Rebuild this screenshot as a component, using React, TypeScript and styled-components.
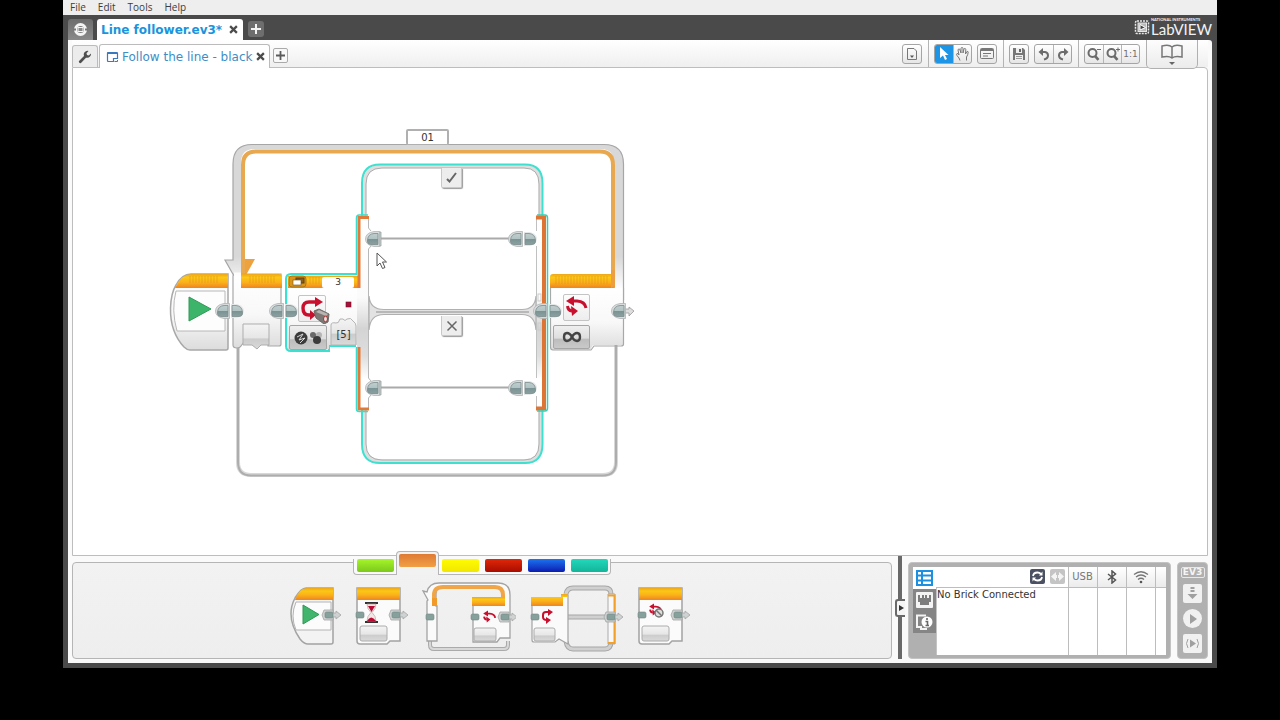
import React from "react";
import styled, { createGlobalStyle, css } from "styled-components";

const Global = createGlobalStyle`
  * { box-sizing: border-box; }
  html, body { margin: 0; background: #000; }
  body { font-family: "DejaVu Sans", sans-serif; font-size: 12px; color: #333; }
  button, input { font: inherit; color: inherit; margin: 0; padding: 0; }
  button { cursor: pointer; }
  svg { display: block; }
`;

/* ---------- window shell ---------- */
const Screen = styled.div`
  min-height: 100vh;
  padding: 0 63px 53px;
  display: flex;
  background: #000;
`;
const Shell = styled.div`
  flex: 1;
  min-width: 0;
  display: flex;
  flex-direction: column;
  background: #4a4a4a;
`;
const MenuBar = styled.nav`
  display: flex;
  gap: 12px;
  height: 15px;
  padding: 0 7px;
  background: #eeeeee;
  font-family: "Open Sans", sans-serif;
  font-size: 10px;
  line-height: 15px;
`;
const MenuItem = styled.button`
  border: 0;
  background: none;
  color: #3c3c3c;
`;
const TitleRow = styled.header`
  display: flex;
  align-items: flex-end;
  height: 25px;
  padding: 0 5px;
`;
const LobbyTab = styled.button`
  display: grid;
  place-items: center;
  width: 25px;
  height: 21px;
  margin-right: 4px;
  border: 0;
  border-radius: 3px 3px 0 0;
  background: linear-gradient(#6c6c6c, #8a8a8a);
`;
const ProjectTab = styled.div`
  display: flex;
  align-items: center;
  gap: 6px;
  height: 21px;
  padding: 0 5px 0 4px;
  border-radius: 3px 3px 0 0;
  background: #fff;
  color: #1a94dc;
  font-weight: bold;
`;
const CloseButton = styled.button`
  display: grid;
  place-items: center;
  width: 10px;
  height: 12px;
  border: 0;
  background: none;
`;
const AddProject = styled.button`
  display: grid;
  place-items: center;
  width: 16px;
  height: 16px;
  margin: 0 0 3px 5px;
  border: 0;
  border-radius: 3px;
  background: #6e6e6e;
`;
const Logo = styled.div`
  display: flex;
  align-items: center;
  gap: 1px;
  margin-left: auto;
  height: 25px;
`;
const LogoText = styled.div`
  display: flex;
  flex-direction: column;
  padding-bottom: 2px;
  color: #f2f2f2;
  font-family: Lato, sans-serif;
  font-size: 15px;
  line-height: 14px;
`;
const LogoSmall = styled.span`
  font-size: 4px;
  line-height: 4px;
  font-weight: bold;
`;
const Body = styled.main`
  flex: 1;
  display: flex;
  flex-direction: column;
  margin: 0 5px 5px;
  padding: 0 4px 4px;
  background: #fafafa;
  border-radius: 0 3px 0 0;
`;

/* ---------- program tabs and toolbar ---------- */
const ToolRow = styled.div`
  display: flex;
  align-items: flex-end;
  height: 27px;
  position: relative;
  background: linear-gradient(#fff, #efefef);
`;
const WrenchTab = styled.button`
  display: grid;
  place-items: center;
  width: 26px;
  height: 22px;
  margin-right: 1px;
  border: 1px solid #bbb;
  border-bottom: 0;
  border-radius: 3px 3px 0 0;
  background: #ececec;
`;
const ProgramTab = styled.div`
  display: flex;
  align-items: center;
  gap: 3px;
  height: 24px;
  margin-bottom: -1px;
  padding: 0 4px 0 6px;
  border: 1px solid #bbb;
  border-bottom: 0;
  border-radius: 3px 3px 0 0;
  background: #fff;
  color: #3d8ec6;
  position: relative;
  z-index: 1;
`;
const AddProgram = styled.button`
  display: grid;
  place-items: center;
  width: 15px;
  height: 15px;
  margin: 0 auto 4px 3px;
  border: 1px solid #aaa;
  border-radius: 2px;
  background: #f8f8f8;
`;
const Section = styled.div<{ $first?: boolean }>`
  display: flex;
  align-items: center;
  gap: 5px;
  height: 27px;
  padding: 0 6px 0 5px;
  border-left: ${(p) => (p.$first ? "0" : "1px solid #b4b4b4")};
`;
const Group = styled.div`
  display: flex;
  border: 1px solid #a5a5a5;
  border-radius: 3px;
  background: linear-gradient(#fff, #e6e6e6);
  overflow: hidden;
`;
const ToolButton = styled.button<{ $active?: boolean }>`
  display: grid;
  place-items: center;
  width: 18px;
  height: 18px;
  border: 0;
  background: ${(p) => (p.$active ? "#1c95e6" : "none")};
  color: #707070;
  font-size: 9px;
  & + & { border-left: 1px solid #b5b5b5; }
`;
const BookTab = styled.button`
  display: grid;
  place-items: center;
  width: 52px;
  height: 29px;
  margin: 0 10px -2px 0;
  border: 1px solid #b0b0b0;
  border-top: 0;
  border-radius: 0 0 5px 5px;
  background: linear-gradient(#fdfdfd, #ebebeb);
  position: relative;
  z-index: 1;
`;

/* ---------- program canvas ---------- */
const Canvas = styled.section`
  flex: 1;
  min-height: 489px;
  border: 1px solid #bdbdbd;
  border-radius: 0 4px 0 0;
  background: #fff;
  padding: 56px 0 0 93px;
`;
const Diagram = styled.div`
  position: relative;
  width: 474px;
  height: 360px;
`;
type Spot = { $x: number; $y: number; $w: number; $h: number };
const spot = css<Spot>`
  position: absolute;
  left: ${(p) => p.$x - 166}px;
  top: ${(p) => p.$y - 124}px;
  width: ${(p) => p.$w}px;
  height: ${(p) => p.$h}px;
`;
const BlockInput = styled.input<Spot & { $framed?: boolean }>`
  ${spot}
  border: ${(p) => (p.$framed ? "2px solid #b0b0b0" : "0")};
  border-bottom-width: ${(p) => (p.$framed ? "1px" : "0")};
  border-radius: 2px;
  background: #fff;
  text-align: center;
  font-size: ${(p) => (p.$framed ? "10px" : "9px")};
  line-height: 11px;
`;
const BlockButton = styled.button<Spot & { $tone?: "light" | "mid" | "clear" }>`
  ${spot}
  display: grid;
  place-items: center;
  border: ${(p) => (p.$tone === "clear" ? "0" : p.$tone === "mid" ? "1px solid #a6a6a6" : "1px solid #c4c4c4")};
  border-radius: 2px;
  font-size: 10px;
  background: ${(p) =>
    p.$tone === "clear"
      ? "none"
      : p.$tone === "mid"
      ? "linear-gradient(#efefef 0%, #dedede 55%, #bdbdbd 60%, #c9c9c9 100%)"
      : "linear-gradient(#fdfdfd, #ededed)"};
`;
const CaseTab = styled.button<Spot>`
  ${spot}
  display: grid;
  place-items: center;
  border: 1px solid #c8c8c8;
  border-top: 0;
  border-radius: 0 0 2px 2px;
  background: #ededed;
  box-shadow: 1px 1px 1px #999;
`;
const Cursor = styled.svg<Spot>`
  ${spot}
  pointer-events: none;
`;

/* ---------- lower area ---------- */
const Lower = styled.div`
  display: flex;
  padding-top: 6px;
`;
const Palette = styled.section`
  flex: 1;
  min-width: 0;
  height: 97px;
  border: 1px solid #b5b5b5;
  border-radius: 4px;
  background: linear-gradient(#f2f2f2, #eeeeee);
`;
const CategoryTabs = styled.div`
  display: flex;
  justify-content: center;
  align-items: flex-end;
  height: 13px;
  margin-top: -1px;
`;
const CategoryTab = styled.button<{ $from: string; $to: string; $on?: boolean; $edge?: "first" | "last" }>`
  display: flex;
  justify-content: center;
  align-items: flex-start;
  width: 43px;
  height: ${(p) => (p.$on ? "24px" : "16px")};
  padding-top: ${(p) => (p.$on ? "2px" : "0")};
  border: 1px solid #b5b5b5;
  border-width: ${(p) =>
    p.$on ? "1px 1px 0" : p.$edge === "first" ? "0 0 1px 1px" : p.$edge === "last" ? "0 1px 1px 0" : "0 0 1px"};
  border-radius: ${(p) => (p.$on ? "4px 4px 0 0" : p.$edge === "first" ? "0 0 0 4px" : p.$edge === "last" ? "0 0 4px 0" : "0")};
  background: ${(p) => (p.$on ? "#f2f2f2" : "#fafafa")};
  position: relative;
  &::before {
    content: "";
    width: 37px;
    height: 13px;
    border-radius: 2px;
    background: linear-gradient(${(p) => p.$from}, ${(p) => p.$to});
  }
`;
const BlockRow = styled.div`
  display: flex;
  justify-content: center;
  gap: 13px;
  padding: 6px 0 0 14px;
`;
const PaletteBlock = styled.button`
  height: 72px;
  border: 0;
  background: none;
`;
const Splitter = styled.div`
  display: flex;
  align-items: center;
  width: 4px;
  margin: -6px 6px 0;
  background: #696969;
`;
const SplitHandle = styled.button`
  flex: none;
  display: grid;
  place-items: center end;
  width: 10px;
  height: 18px;
  margin-left: -3px;
  border: 2px solid #696969;
  border-right: 0;
  border-radius: 3px 0 0 3px;
  background: #f5f5f5;
`;
const BrickPanel = styled.section`
  display: flex;
  width: 263px;
  height: 97px;
  padding: 4px;
  border: 1px solid #c3c3c3;
  border-radius: 4px;
  background: #b0b0b0;
`;
const BrickTabs = styled.div`
  display: flex;
  flex-direction: column;
  width: 23px;
`;
const BrickTab = styled.button<{ $on?: boolean }>`
  display: grid;
  place-items: center;
  width: 23px;
  height: 22px;
  border: 0;
  background: ${(p) => (p.$on ? "#fff" : "#858585")};
`;
const BrickTable = styled.table`
  flex: 1;
  table-layout: fixed;
  border-collapse: collapse;
  background: #fff;
  height: 88px;
  th, td { border-left: 1px solid #bdbdbd; padding: 0; }
  th:first-child { border-left: 0; background: #fff; }
  td:first-child { border-left: 1px solid #c4c4c4; }
  th {
    height: 20px;
    border-bottom: 1px solid #bdbdbd;
    background: linear-gradient(#fff, #ebebeb);
    font-weight: normal;
    font-size: 10px;
    color: #777;
  }
  td { vertical-align: top; font-size: 10px; line-height: 14px; color: #333; white-space: nowrap; }
  th svg { margin: 0 auto; }
`;
const Col = styled.col<{ $w?: number }>`
  width: ${(p) => (p.$w ? p.$w + "px" : "auto")};
`;
const HeadTools = styled.div`
  display: flex;
  justify-content: flex-end;
  gap: 5px;
  padding-right: 3px;
`;
const SmallButton = styled.button<{ $dark?: boolean }>`
  display: grid;
  place-items: center;
  width: 15px;
  height: 15px;
  border: 0;
  border-radius: 2px;
  background: ${(p) => (p.$dark ? "#4b5162" : "#c4c4c4")};
`;
const RunPanel = styled.section`
  display: flex;
  flex-direction: column;
  align-items: center;
  gap: 6px;
  width: 31px;
  height: 97px;
  margin-left: 6px;
  padding-top: 4px;
  border: 1px solid #c3c3c3;
  border-radius: 4px;
  background: #b0b0b0;
`;
const Ev3Label = styled.div`
  width: 24px;
  height: 11px;
  border: 1px solid #e8e8e8;
  border-radius: 2px;
  color: #f5f5f5;
  font-size: 9px;
  font-weight: bold;
  line-height: 9px;
  text-align: center;
`;
const RunButton = styled.button<{ $round?: boolean }>`
  display: grid;
  place-items: center;
  width: 19px;
  height: 19px;
  border: 0;
  border-radius: ${(p) => (p.$round ? "50%" : "2px")};
  background: #f1f1f1;
`;

/* ---------- small drawings ---------- */
const Cross = ({ s = 9, w = 2, c = "#4c4c4c" }: { s?: number; w?: number; c?: string }) => (
  <svg width={s} height={s} viewBox="0 0 8 8"><path d="M1 1L7 7M7 1L1 7" stroke={c} strokeWidth={w} /></svg>
);
const Plus = ({ c, s = 10 }: { c: string; s?: number }) => (
  <svg width={s} height={s} viewBox="0 0 10 10"><path d="M5 0V10M0 5H10" stroke={c} strokeWidth="2" /></svg>
);
const Magnifier = ({ sign }: { sign: string }) => (
  <svg width="16" height="16" viewBox="0 0 16 16" fill="none" stroke="#6b6b6b">
    <circle cx="6.500" cy="7" r="4" strokeWidth="2" />
    <path d="M9 10L12.500 13.800" strokeWidth="2.600" />
    <path d={sign} strokeWidth="1" />
  </svg>
);

const Gradients = () => (
  <defs>
    <linearGradient id="gold" x1="0" y1="0" x2="0" y2="1">
      <stop offset="0" stopColor="#eda61c" /><stop offset=".25" stopColor="#fbc814" />
      <stop offset=".6" stopColor="#fbb01c" /><stop offset="1" stopColor="#ef8420" />
    </linearGradient>
    <linearGradient id="shell" x1="0" y1="0" x2="0" y2="1">
      <stop offset="0" stopColor="#fff" /><stop offset=".55" stopColor="#f8f8f8" /><stop offset="1" stopColor="#dcdcdc" />
    </linearGradient>
    <linearGradient id="slot" x1="0" y1="0" x2="0" y2="1">
      <stop offset="0" stopColor="#f4f4f4" /><stop offset=".55" stopColor="#e6e6e6" /><stop offset=".6" stopColor="#cccccc" /><stop offset="1" stopColor="#dadada" />
    </linearGradient>
    <linearGradient id="column" x1="0" y1="0" x2="0" y2="1">
      <stop offset="0" stopColor="#fff" /><stop offset=".42" stopColor="#fbfbfb" /><stop offset=".58" stopColor="#d4d4d4" />
      <stop offset=".72" stopColor="#dedede" /><stop offset=".84" stopColor="#fff" /><stop offset="1" stopColor="#fff" />
    </linearGradient>
    <linearGradient id="band" x1="0" y1="144" x2="0" y2="288" gradientUnits="userSpaceOnUse">
      <stop offset="0" stopColor="#d8d8d8" /><stop offset=".78" stopColor="#d8d8d8" /><stop offset="1" stopColor="#fdfdfd" />
    </linearGradient>
    <linearGradient id="plug" x1="0" y1="0" x2="0" y2="1">
      <stop offset="0" stopColor="#c0cdcd" /><stop offset=".5" stopColor="#b0c2c2" /><stop offset=".54" stopColor="#7b9394" /><stop offset="1" stopColor="#8ba0a0" />
    </linearGradient>
    <pattern id="ribs" width="3" height="8" patternUnits="userSpaceOnUse"><path d="M1 0V8" stroke="#d98a10" strokeWidth="1" opacity=".45" /></pattern>
  </defs>
);

/* Connector halves: "out" is round on the left, "in" is round on the right. */
const Plug = ({ x, y, dir }: { x: number; y: number; dir: "in" | "out" }) => (
  <g transform={`translate(${x} ${y})`}>
    {dir === "out" ? (
      <>
        <path d="M11.500 -7.500H6Q-2.500 -6 -2.500 0Q-2.500 6 6 7.500H11.500Z" fill="#d9dcdc" stroke="#b0b4b4" strokeWidth=".8" />
        <path d="M10 -5.500H6Q0 -5 -.5 1V3Q0 5.500 3 5.500H10Z" fill="url(#plug)" stroke="#7c8d8e" strokeWidth=".8" />
      </>
    ) : (
      <>
        <path d="M0 -7H6Q13 -5 13 0Q13 5 6 7H0Z" fill="#e6e8e8" />
        <path d="M1 -5.500H5Q11 -5 11.500 1V3Q11 5.500 8 5.500H1Z" fill="url(#plug)" stroke="#7c8d8e" strokeWidth=".8" />
      </>
    )}
  </g>
);

const ProgramDrawing = () => (
  <svg width="474" height="360" viewBox="166 124 474 360" fill="none" aria-hidden="true">
    <Gradients />
    {/* loop frame */}
    <path d="M238 347V462Q238 475 251 475H603Q616 475 616 462V345" stroke="#d8d8d8" strokeWidth="4" />
    <path d="M238 347V462Q238 475.500 251 475.500H603Q616 475.500 616 462V345" stroke="#adadad" strokeWidth="2" />
    <path d="M233 260V164Q233 144.500 252 144.500H604Q623.500 144.500 623.500 164V288H614V163Q614 149 601 149H254Q241 149 241 163V276H234L225 260Z" fill="url(#band)" />
    <path d="M234 276L225 260H233V164Q233 144.500 252 144.500H604Q623.500 144.500 623.500 164V300" stroke="#a6a6a6" strokeWidth="1.200" />
    <path d="M242 259H255L245 277H242Z" fill="#eda23e" />
    <path d="M243 276V165Q243 151.500 256 151.500H600Q613 151.500 613 165V288" stroke="#e8a850" strokeWidth="4" />
    {/* start block */}
    <path d="M228 274V348Q228 350 226 350H190Q187 350 184 347Q170 332 170.500 308Q171 293 176 285Q182 274 191 274Z" fill="url(#shell)" stroke="#a8a8a8" strokeWidth="1.500" />
    <path d="M228 274H191Q182 274 175 288H228Z" fill="url(#gold)" />
    <rect x="188" y="276" width="31" height="7" fill="url(#ribs)" />
    <path d="M225 291H176Q171 310 177 331H225Z" fill="#fdfdfd" stroke="#b8b8b8" />
    <path d="M189 297V321L211 309Z" fill="#3cb56b" stroke="#2f9a56" />
    <Plug x={218} y={311} dir="out" />
    {/* loop entry */}
    <path d="M234 274H281V344Q281 346 279 346H268V342H244L241 346Q240 348 237 348Q233 348 233 345V276Z" fill="url(#shell)" stroke="#a8a8a8" strokeWidth="1.200" />
    <path d="M234 274H241" stroke="#fdfdfd" strokeWidth="3" />
    <path d="M241 274H279Q282 274 282 277V288H241Z" fill="url(#gold)" />
    <rect x="248" y="276" width="27" height="7" fill="url(#ribs)" />
    <path d="M243 324H269V345H261L257 349L252 345H243Z" fill="url(#slot)" stroke="#adadad" />
    <Plug x={231} y={311} dir="in" />
    <Plug x={272} y={311} dir="out" />
    {/* switch cases */}
    <path d="M364.500 218V184Q364.500 166.500 382 166.500H524Q540.500 166.500 540.500 184V218M364.500 408V444Q364.500 461 382 461H524Q540.500 461 540.500 444V408" stroke="#dedede" strokeWidth="3.500" />
    <path d="M366 218V184Q366 168 382 168H524Q539 168 539 184V218M366 408V444Q366 460 382 460H524Q539 460 539 444V408" stroke="#adadad" />
    <path d="M362 216V183Q362 164.500 380 164.500H525Q542.500 164.500 542.500 183V216M362 410V444Q362 463 380 463H525Q542.500 463 542.500 444V410" stroke="#3fe0cf" strokeWidth="2" />
    <path d="M369 296Q370 309.500 384 309.500H522Q535 309.500 536 296V330Q535 314.500 522 314.500H384Q370 314.500 369 330Z" fill="#e2e2e2" stroke="#b0b0b0" strokeWidth="1.200" />
    <path d="M376 312H529" stroke="#b8b8b8" strokeWidth="2" />
    <path d="M380 238.500H512M380 387.500H512" stroke="#aaa" strokeWidth="2" />
    {/* switch body */}
    <path d="M357 274H291Q286 274 286 279V346Q286 351 291 351H329V346H356" fill="#ececec" stroke="#38e1d0" strokeWidth="2" />
    <path d="M288 288H358V345H329V349H288Z" fill="url(#shell)" />
    <path d="M357 216H369V410H357Z" fill="url(#column)" />
    <path d="M368.500 218V228L371 231M371 246L368.500 249V378L371 381M371 395L368.500 398V409" stroke="#b8b8b8" />
    <path d="M288 276H358V288H288Z" fill="url(#gold)" />
    <path d="M369 217.500H359V288M359 347V409H369" stroke="#e17a38" strokeWidth="3" />
    <path d="M356.500 275V218Q356.500 215 359 215H368M356.500 347V409Q356.500 411.500 359 411.500H368" stroke="#3bdccb" strokeWidth="1.500" />
    <rect x="308" y="277" width="12" height="7" fill="url(#ribs)" />
    <rect x="289" y="276" width="17" height="11" rx="3" fill="#d9951a" stroke="#a36d12" strokeWidth=".8" />
    <rect x="296" y="278" width="8" height="5" fill="#8b5d17" stroke="#5d430f" />
    <rect x="293" y="280" width="8" height="5" fill="#fff" stroke="#775010" strokeWidth=".6" />
    <rect x="346" y="302" width="5" height="5" fill="#a51237" stroke="#7a0d29" strokeWidth=".6" />
    <path d="M331 345V325Q331 322 336 323Q339 323 339 321Q339 318 343 319Q345 322 347 319Q351 317 353 321Q356 323 356 326V345Z" fill="url(#slot)" stroke="#b4b4b4" />
    <path d="M536 216H546V410H536Z" fill="url(#column)" />
    <path d="M536.500 218V231M536.500 246V378M536.500 396V409" stroke="#c0c0c0" />
    <path d="M536 217.500H544V408.500H536" stroke="#dc7536" strokeWidth="4" />
    <path d="M537 215H545Q547.500 215 547.500 218V408Q547.500 411 545 411H537" stroke="#3bcdb4" strokeWidth="1.500" />
    <rect x="538" y="294" width="3" height="7" stroke="#ccc" /><rect x="538" y="323" width="3" height="7" stroke="#ccc" />
    <path d="M378 232H381V246H378Z" fill="#c4c8c8" stroke="#9aa3a3" strokeWidth=".8" /><path d="M378 381H381V395H378Z" fill="#c4c8c8" stroke="#9aa3a3" strokeWidth=".8" />
    <Plug x={368} y={239} dir="out" /><Plug x={511} y={239} dir="out" /><Plug x={524} y={239} dir="in" />
    <Plug x={368} y={388} dir="out" /><Plug x={511} y={388} dir="out" /><Plug x={524} y={388} dir="in" />
    <Plug x={285} y={311} dir="in" />
    {/* loop end */}
    <path d="M551 288H623V344Q623 345 622 345H593L590 350H553Q551 350 551 347Z" fill="url(#shell)" />
    <path d="M623.500 288V344Q623.500 346 621 346H594L591 350H553Q550.500 350 550.500 347V288" stroke="#a8a8a8" strokeWidth="1.200" />
    <path d="M553 274H615V285Q615 288 612 288H550V277Q550 274 553 274Z" fill="url(#gold)" />
    <path d="M611 270H615V286L611 288Z" fill="#eb9f42" />
    <rect x="555" y="276" width="54" height="8" fill="url(#ribs)" />
    <Plug x={536} y={311} dir="out" /><Plug x={549} y={311} dir="in" />
    <path d="M624 309H629V307L634 311L629 316V313H624Z" fill="#ddd" stroke="#999" strokeWidth=".8" />
    <Plug x={614} y={311} dir="out" />
  </svg>
);

const LoopArrows = () => (
  <svg width="26" height="26" viewBox="0 0 26 26" fill="none" stroke="#c8102e" strokeWidth="3">
    <path d="M8 6H13Q21 6.500 22 13" /><path d="M10 1L2 6L10 11Z" fill="#c8102e" stroke="none" />
    <path d="M3.500 11Q4 15.500 8 16" /><path d="M7 11L14 16L8 21Z" fill="#c8102e" stroke="none" />
  </svg>
);
const SwitchArrows = () => (
  <svg width="32" height="28" viewBox="0 0 32 28" fill="none" stroke="#c8102e" strokeWidth="3.400">
    <path d="M17 6H10Q4 6 4 12Q4 19 10 19H13" />
    <path d="M16 1L24 6L16 11Z" fill="#c8102e" stroke="none" /><path d="M11 14L17 19L11 24Z" fill="#c8102e" stroke="none" />
    <path d="M15 15L20 13L30 18L29 26L25 28L17 22Z" fill="#7d7875" stroke="#6c6866" strokeWidth="1" />
    <path d="M20 14L29 18L27 20L17 16Z" fill="#b9b5b2" stroke="none" />
    <ellipse cx="26.500" cy="23" rx="2" ry="2.800" fill="#e9e3e0" stroke="#a33" strokeWidth="1" />
  </svg>
);
const SensorMode = () => (
  <svg width="34" height="20" viewBox="0 0 34 20" fill="none">
    <circle cx="10" cy="10" r="6.500" fill="#3c3c3c" /><path d="M6 9L12 6L8 12L14 10L9 15" stroke="#d8d8d8" />
    <circle cx="22" cy="7" r="3" fill="#6a6a6a" /><circle cx="28" cy="7" r="3" fill="#b5b5b5" /><circle cx="26" cy="12" r="4" fill="#3c3c3c" />
  </svg>
);
const Infinity8 = () => (
  <svg width="22" height="14" viewBox="0 0 22 14" fill="none" stroke="#454545" strokeWidth="2.400">
    <path d="M11 7C8 1.500 3 2 3 7S8 12.500 11 7C14 1.500 19 2 19 7S14 12.500 11 7Z" />
  </svg>
);

/* ---------- palette drawings ---------- */
const MiniPlug = ({ x, y, tail }: { x: number; y: number; tail?: boolean }) => (
  <g>
    {tail && <path d={`M${x - 5} ${y - 5}H${x + 4}V${y - 2}H${x + 7}V${y - 4}L${x + 12} ${y}L${x + 7} ${y + 4}V${y + 2}H${x + 4}V${y + 5}H${x - 5}L${x - 7} ${y}Z`} fill="#cfd2d2" stroke="#a4a4a4" strokeWidth=".8" />}
    <rect x={x - 4} y={y - 3} width="8" height="6" rx="1.500" fill="#86a09c" stroke="#708683" strokeWidth=".6" />
  </g>
);
const MiniStart = () => (
  <svg width="53" height="72" viewBox="288 581 53 72" fill="none">
    <path d="M332 588V642Q332 644 330 644H307Q303 644 299 639Q284 617 294 598Q300 588 305 588Z" fill="#f3f3f3" stroke="#a3a3a3" strokeWidth="1.500" />
    <path d="M332 588H306Q298 588 294 600H332Z" fill="url(#gold)" />
    <path d="M330 602H295Q289 616 295 630H330Z" fill="#fcfcfc" stroke="#b4b4b4" />
    <path d="M302 605V624L318 614.500Z" fill="#41b56c" stroke="#2f9a56" />
    <MiniPlug x={328} y={615} tail />
  </svg>
);
const MiniBody = ({ x }: { x: number }) => (
  <g>
    <path d={`M${x} 588H${x + 43}V641H${x + 33}L${x + 30} 644H${x + 3}Q${x} 644 ${x} 641Z`} fill="#fbfbfb" stroke="#a3a3a3" strokeWidth="1.500" />
    <path d={`M${x} 588H${x + 43}V600H${x}Z`} fill="url(#gold)" />
    <rect x={x + 3} y="626" width="27" height="15" rx="2" fill="url(#slot)" stroke="#acacac" />
    <MiniPlug x={x + 3} y={615} />
    <MiniPlug x={x + 39} y={615} tail />
  </g>
);
const MiniWait = () => (
  <svg width="54" height="72" viewBox="354 581 54 72" fill="none">
    <MiniBody x={356} />
    <path d="M364 603H377M364 622H377" stroke="#333" strokeWidth="2" />
    <path d="M366 604H375Q375 609 371 612.500Q375 616 375 621H366Q366 616 370 612.500Q366 609 366 604Z" fill="#f4e6e6" stroke="#b98" strokeWidth=".6" />
    <path d="M367 606H374L370.500 612ZM366 621Q370 614 375 621Z" fill="#b80c35" />
  </svg>
);
const MiniLoop = () => (
  <svg width="94" height="72" viewBox="421 581 94 72" fill="none">
    <path d="M429 641V645Q429 649 433 649H503Q507 649 507 645V641" stroke="#aaa" strokeWidth="4" />
    <path d="M429 641V645Q429 649 433 649H503Q507 649 507 645V641" stroke="#d8d8d8" strokeWidth="2" />
    <path d="M427 600L422 591L426 592Q428 583 438 583H497Q509 583 509 595V638H499L496 642H472V600H502V596Q502 587 494 587H442Q435 587 435 594V606H436V641H426V601Z" fill="#fafafa" stroke="#a3a3a3" strokeWidth="1.300" />
    <path d="M433 605V595Q433 587 442 587H494Q502 587 502 595V600" stroke="#f0a648" strokeWidth="4" />
    <path d="M431 598H436V606H431Z" fill="#f29a28" />
    <path d="M471 597H504V606H471Z" fill="url(#gold)" />
    <rect x="473" y="628" width="22" height="13" rx="2" fill="url(#slot)" stroke="#acacac" />
    <g transform="translate(481 610) scale(.6)"><path d="M8 6H13Q21 6.500 22 13M3.500 11Q4 15.500 8 16" stroke="#c8102e" strokeWidth="3.200" /><path d="M10 1L2 6L10 11ZM7 11L14 16L8 21Z" fill="#c8102e" /></g>
    <MiniPlug x={429} y={617} /><MiniPlug x={474} y={617} /><MiniPlug x={504} y={617} tail />
  </svg>
);
const MiniSwitch = () => (
  <svg width="94" height="72" viewBox="528 581 94 72" fill="none">
    <path d="M565 594Q566 588 572 588H604Q610 588 610 594M565 617H610M565 641Q566 649 572 649H604Q610 649 610 641" stroke="#a6a6a6" strokeWidth="5" />
    <path d="M565 594Q566 588 572 588H604Q610 588 610 594M565 617H610M565 641Q566 649 572 649H604Q610 649 610 641" stroke="#d0d0d0" strokeWidth="3" />
    <path d="M531 598H561V595H567V644L558 639L554 642H533Q531 642 531 640Z" fill="#fafafa" stroke="#a3a3a3" strokeWidth="1.200" />
    <path d="M530 597H560V594H567V597H562V606H530Z" fill="url(#gold)" />
    <rect x="533" y="628" width="21" height="13" rx="2" fill="url(#slot)" stroke="#acacac" />
    <path d="M607 594H614V644H607Z" fill="#f8f8f8" stroke="#aaa" /><path d="M607 595.500H613.500V643H607" stroke="#f2a02a" strokeWidth="2" />
    <path d="M548 612H545Q542 612 542 615V617Q542 620 546 620" stroke="#c8102e" strokeWidth="2" /><path d="M547 609L552 612L547 616ZM545 617L550 620L545 624Z" fill="#c8102e" />
    <MiniPlug x={534} y={617} /><MiniPlug x={610} y={617} tail />
  </svg>
);
const MiniInterrupt = () => (
  <svg width="54" height="72" viewBox="635 581 54 72" fill="none">
    <MiniBody x={638} />
    <g transform="translate(647 603) scale(.6)"><path d="M8 6H13Q21 6.500 22 13M3.500 11Q4 15.500 8 16" stroke="#c8102e" strokeWidth="3.200" /><path d="M10 1L2 6L10 11ZM7 11L14 16L8 21Z" fill="#c8102e" /></g>
    <circle cx="658" cy="613" r="4" fill="#ddd" stroke="#777" strokeWidth="1.500" /><path d="M655 610L661 616" stroke="#777" strokeWidth="1.500" />
  </svg>
);

const menus = ["File", "Edit", "Tools", "Help"];
const categories = [
  { name: "Action", from: "#a6f52a", to: "#7cc81c", edge: "first" as const },
  { name: "Flow Control", from: "#e07a35", to: "#f0a044", on: true },
  { name: "Sensor", from: "#fffc00", to: "#f2e600" },
  { name: "Data Operations", from: "#e02808", to: "#a80c00" },
  { name: "Advanced", from: "#1c74f0", to: "#0c1cb0" },
  { name: "My Blocks", from: "#22d8bc", to: "#14b498", edge: "last" as const },
];
const paletteBlocks = [
  { name: "Start", art: <MiniStart /> },
  { name: "Wait", art: <MiniWait /> },
  { name: "Loop", art: <MiniLoop /> },
  { name: "Switch", art: <MiniSwitch /> },
  { name: "Loop Interrupt", art: <MiniInterrupt /> },
];

export default function App() {
  return (
    <Screen>
      <Global />
      <Shell>
        <MenuBar aria-label="Main menu">
          {menus.map((m) => <MenuItem key={m}>{m}</MenuItem>)}
        </MenuBar>
        <TitleRow>
          <LobbyTab aria-label="Lobby">
            <svg width="15" height="15" viewBox="0 0 15 15" fill="none">
              <circle cx="7.500" cy="7.500" r="5" stroke="#f4f4f4" strokeWidth="3" />
              <path d="M0 7.500H3M12 7.500H15" stroke="#777" strokeWidth="2" />
              <rect x="5" y="5.500" width="5" height="4" fill="#888" stroke="#f4f4f4" />
            </svg>
          </LobbyTab>
          <ProjectTab>
            <span>Line follower.ev3*</span>
            <CloseButton aria-label="Close project"><Cross /></CloseButton>
          </ProjectTab>
          <AddProject aria-label="New project"><Plus c="#f4f4f4" /></AddProject>
          <Logo>
            <svg width="16" height="15" viewBox="0 0 16 15" fill="none" stroke="#e8e8e8">
              <rect x="1.500" y="1" width="13" height="12.500" rx="1.500" strokeWidth="1.500" strokeDasharray="2 1" />
              <rect x="4" y="3" width="8.500" height="8.500" fill="#bbb" />
              <path d="M6 4.500L11.500 7.500L6 10Z" fill="#444" stroke="#fff" />
            </svg>
            <LogoText><LogoSmall>NATIONAL INSTRUMENTS</LogoSmall>LabVIEW</LogoText>
          </Logo>
        </TitleRow>
        <Body>
          <ToolRow>
            <WrenchTab aria-label="Project properties">
              <svg width="14" height="14" viewBox="0 0 14 14">
                <path d="M1 11L6 6Q5 3 7.500 1.500Q9 .5 10.500 1L8.500 3.200L9 5L10.800 5.500L13 3.500Q13.400 5 12 6.500Q10.500 8.300 8 7.700L3 13Q1.800 13.500 1.200 12.500Q.5 11.800 1 11Z" fill="#4f4f4f" />
              </svg>
            </WrenchTab>
            <ProgramTab>
              <svg width="13" height="12" viewBox="0 0 13 12" fill="none" stroke="#3a78c0">
                <path d="M2 1.500H10.500Q11.500 1.500 11.500 2.500V7.500H7.500V10.500H2.500Q1.500 10.500 1.500 9.500V2Z" strokeWidth="1.200" />
                <path d="M1.500 2H11.500" strokeWidth="2" /><path d="M8.500 10.500H11.500V9" />
              </svg>
              <span>Follow the line - black</span>
              <CloseButton aria-label="Close program"><Cross /></CloseButton>
            </ProgramTab>
            <AddProgram aria-label="New program"><Plus c="#5a5a5a" s={9} /></AddProgram>
            <Section $first>
              <Group><ToolButton aria-label="Program list">
                <svg width="12" height="14" viewBox="0 0 12 14" fill="none" stroke="#777"><path d="M1.500 1.500H8L10.500 4V12.500H1.500Z" /><path d="M4 8.500H8L6 11Z" fill="#555" stroke="none" /></svg>
              </ToolButton></Group>
            </Section>
            <Section>
              <Group>
                <ToolButton $active aria-label="Select">
                  <svg width="12" height="15" viewBox="0 0 12 15"><path d="M2 1V12L5 9.500L7 14L9 13L7 9H10.500Z" fill="#fff" /></svg>
                </ToolButton>
                <ToolButton aria-label="Pan">
                  <svg width="15" height="16" viewBox="0 0 15 16" fill="none" stroke="#777"><path d="M5 14.500Q4.500 12 2 9.500Q1 8 2 7.500Q3 7.200 4 9L3 4Q3 3 4 3T5 4L6 7V2.500Q6 1.500 7 1.500T8 2.500V7L9 3Q9.300 2.200 10 2.400T10.800 3.500L10.500 8L12 5.500Q13 5 13.200 6Q13 9 11.500 11V14.500" /></svg>
                </ToolButton>
              </Group>
              <Group><ToolButton aria-label="Comment">
                <svg width="16" height="14" viewBox="0 0 16 14" fill="none" stroke="#777"><rect x="1.500" y="1.500" width="13" height="10" rx="1" /><path d="M2 3H14" strokeWidth="2" /><path d="M4 6.500H12M4 9H9" /></svg>
              </ToolButton></Group>
            </Section>
            <Section>
              <Group><ToolButton aria-label="Save">
                <svg width="14" height="14" viewBox="0 0 14 14"><path d="M1 1H11L13 3V13H1Z" fill="#777" /><rect x="4" y="1" width="6" height="5" fill="#eee" /><rect x="7" y="2" width="2" height="3" fill="#666" /><rect x="3" y="8" width="8" height="5" fill="#eee" /><path d="M4 9.500H10M4 11.500H10" stroke="#999" /></svg>
              </ToolButton></Group>
              <Group>
                <ToolButton aria-label="Undo">
                  <svg width="14" height="14" viewBox="0 0 14 14" fill="none"><path d="M5 5H8Q11 5.500 11 8.500Q11 11.500 7 12.500" stroke="#6c6c6c" strokeWidth="2" /><path d="M6 1V9L1.500 5Z" fill="#6c6c6c" /></svg>
                </ToolButton>
                <ToolButton aria-label="Redo">
                  <svg width="14" height="14" viewBox="0 0 14 14" fill="none"><path d="M9 5H6Q3 5.500 3 8.500Q3 11.500 7 12.500" stroke="#6c6c6c" strokeWidth="2" /><path d="M8 1V9L12.500 5Z" fill="#6c6c6c" /></svg>
                </ToolButton>
              </Group>
            </Section>
            <Section>
              <Group>
                <ToolButton aria-label="Zoom out"><Magnifier sign="M11 3.500H15" /></ToolButton>
                <ToolButton aria-label="Zoom in"><Magnifier sign="M11 3.500H15M13 1.500V5.500" /></ToolButton>
                <ToolButton>1:1</ToolButton>
              </Group>
            </Section>
            <BookTab aria-label="Content editor">
              <svg width="24" height="24" viewBox="0 0 24 24" fill="none" stroke="#777" strokeWidth="1.500">
                <path d="M12 5Q9 2 2 4V15Q9 13.500 12 16Q15 13.500 22 15V4Q15 2 12 5ZM12 5V16" /><path d="M9 20H15L12 23Z" fill="#666" stroke="none" />
              </svg>
            </BookTab>
          </ToolRow>
          <Canvas aria-label="Program canvas">
            <Diagram>
              <ProgramDrawing />
              <BlockInput $x={406} $y={129} $w={43} $h={16} $framed aria-label="Loop name" defaultValue="01" />
              <BlockInput $x={322} $y={277} $w={32} $h={11} aria-label="Port" defaultValue="3" />
              <BlockButton $x={298} $y={295} $w={28} $h={27} aria-label="Switch"><SwitchArrows /></BlockButton>
              <BlockButton $x={289} $y={325} $w={38} $h={25} $tone="mid" aria-label="Sensor mode"><SensorMode /></BlockButton>
              <BlockButton $x={331} $y={324} $w={25} $h={20} $tone="clear">[5]</BlockButton>
              <CaseTab $x={441} $y={168} $w={21} $h={20} aria-label="True case">
                <svg width="13" height="13" viewBox="0 0 13 13" fill="none"><path d="M2 8L4.500 10.500L11 2" stroke="#666" strokeWidth="2" /></svg>
              </CaseTab>
              <CaseTab $x={441} $y={316} $w={21} $h={20} aria-label="False case"><Cross s={12} w={1} c="#666" /></CaseTab>
              <BlockButton $x={563} $y={294} $w={27} $h={27} aria-label="Loop"><LoopArrows /></BlockButton>
              <BlockButton $x={553} $y={325} $w={37} $h={24} $tone="mid" aria-label="Unlimited"><Infinity8 /></BlockButton>
              <Cursor $x={376} $y={252} $w={12} $h={18} viewBox="0 0 12 18">
                <path d="M1 1V14L4 11L6.500 16.500L9 15.500L6.500 10H10.500Z" fill="#fff" stroke="#555" />
              </Cursor>
            </Diagram>
          </Canvas>
          <Lower>
            <Palette aria-label="Programming palette">
              <CategoryTabs>
                {categories.map((c) => (
                  <CategoryTab key={c.name} $from={c.from} $to={c.to} $on={c.on} $edge={c.edge} aria-label={c.name} />
                ))}
              </CategoryTabs>
              <BlockRow>
                {paletteBlocks.map((b) => <PaletteBlock key={b.name} aria-label={b.name}>{b.art}</PaletteBlock>)}
              </BlockRow>
            </Palette>
            <Splitter>
              <SplitHandle aria-label="Collapse hardware page">
                <svg width="6" height="8" viewBox="0 0 6 8"><path d="M0 1V7L5 4Z" fill="#333" /></svg>
              </SplitHandle>
            </Splitter>
            <BrickPanel aria-label="Hardware">
              <BrickTabs>
                <BrickTab $on aria-label="Available bricks">
                  <svg width="17" height="16" viewBox="0 0 17 16" fill="none" stroke="#1c8fe0" strokeWidth="2"><rect x="1" y="1" width="15" height="14" /><path d="M1 5.500H16M1 10.500H16M6 1V15" /></svg>
                </BrickTab>
                <BrickTab aria-label="Port view">
                  <svg width="17" height="16" viewBox="0 0 17 16"><rect width="17" height="16" rx="1" fill="#f4f4f4" /><path d="M2 3H4V6H6V3H8V6H9V3H11V6H13V3H15V10H13V13H4V10H2Z" fill="#7d7d7d" /></svg>
                </BrickTab>
                <BrickTab aria-label="Brick information">
                  <svg width="17" height="16" viewBox="0 0 17 16" fill="none"><path d="M10 1.500H1V13H6M4 15H11" stroke="#f4f4f4" strokeWidth="2" /><circle cx="11" cy="8" r="5.500" fill="#fff" /><path d="M11 4V6M9.500 7.500H11.500V11M9.500 11.500H13" stroke="#666" strokeWidth="1.600" /></svg>
                </BrickTab>
              </BrickTabs>
              <BrickTable>
                <colgroup><Col /><Col $w={29} /><Col $w={29} /><Col $w={29} /><Col $w={11} /></colgroup>
                <thead>
                  <tr>
                    <th>
                      <HeadTools>
                        <SmallButton $dark aria-label="Refresh">
                          <svg width="13" height="13" viewBox="0 0 13 13" fill="none" stroke="#fff" strokeWidth="1.800"><path d="M2 6Q2.500 2.500 6.500 2.500Q8.500 2.500 10 4M11 7Q10.500 10.500 6.500 10.500Q4.500 10.500 3 9" /><path d="M11.500 1.500V5.500H8ZM1.500 11.500V7.500H5Z" fill="#fff" stroke="none" /></svg>
                        </SmallButton>
                        <SmallButton aria-label="Disconnect">
                          <svg width="13" height="11" viewBox="0 0 13 11" fill="#f4f4f4"><path d="M0 5.500L5 1V4H6V7H5V10ZM13 5.500L8 1V4H7V7H8V10Z" /></svg>
                        </SmallButton>
                      </HeadTools>
                    </th>
                    <th>USB</th>
                    <th aria-label="Bluetooth"><svg width="10" height="14" viewBox="0 0 10 14" fill="none" stroke="#555" strokeWidth="1.500"><path d="M1 4L8.500 10L5 13V1L8.500 4L1 10" /></svg></th>
                    <th aria-label="Wi-Fi"><svg width="16" height="14" viewBox="0 0 16 14" fill="none" stroke="#777" strokeWidth="1.300"><path d="M1 4.500Q8-1 15 4.500M3 7Q8 3 13 7M5 9.500Q8 7 11 9.500" /><circle cx="8" cy="12" r="1.300" fill="#555" stroke="none" /></svg></th>
                    <th />
                  </tr>
                </thead>
                <tbody><tr><td>No Brick Connected</td><td /><td /><td /><td /></tr></tbody>
              </BrickTable>
            </BrickPanel>
            <RunPanel aria-label="Download and run">
              <Ev3Label>EV3</Ev3Label>
              <RunButton aria-label="Download">
                <svg width="13" height="15" viewBox="0 0 13 15" fill="#a0a0a0"><path d="M4.500 1H8.500V3H4.500ZM4.500 4H8.500V6H4.500ZM1.500 8H11.500L6.500 13Z" /></svg>
              </RunButton>
              <RunButton $round aria-label="Download and run"><svg width="8" height="10" viewBox="0 0 8 10"><path d="M1 0V10L8 5Z" fill="#a0a0a0" /></svg></RunButton>
              <RunButton aria-label="Run selected">
                <svg width="15" height="11" viewBox="0 0 15 11" fill="none" stroke="#a0a0a0"><path d="M3 1Q0 5.500 3 10M12 1Q15 5.500 12 10" /><path d="M5 1.500V9.500L11 5.500Z" fill="#a0a0a0" stroke="none" /></svg>
              </RunButton>
            </RunPanel>
          </Lower>
        </Body>
      </Shell>
    </Screen>
  );
}
